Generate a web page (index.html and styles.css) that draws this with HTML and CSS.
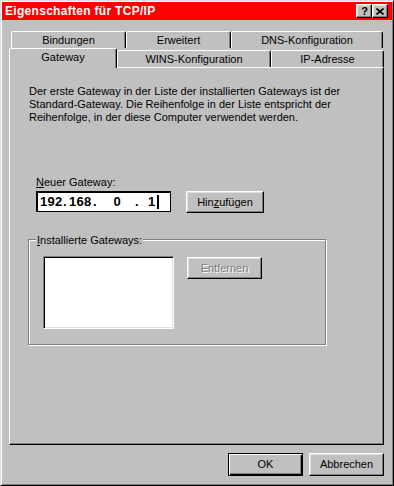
FILE: index.html
```html
<!DOCTYPE html>
<html lang="de">
<head>
<meta charset="utf-8">
<title>Eigenschaften für TCP/IP</title>
<link rel="stylesheet" href="styles.css">
</head>
<body>
<div class="window">
  <div class="titlebar">
    <span class="title">Eigenschaften für TCP/IP</span>
    <span class="tbtn help">?</span>
    <span class="tbtn close"><svg width="8" height="7" viewBox="0 0 8 7"><path d="M0.5 0.5 L7.5 6.5 M7.5 0.5 L0.5 6.5" stroke="#000" stroke-width="1.6" fill="none"/></svg></span>
  </div>

  <div class="tabrow row1">
    <div class="tab t-bind">Bindungen</div>
    <div class="tab t-erw">Erweitert</div>
    <div class="tab t-dns">DNS-Konfiguration</div>
  </div>
  <div class="tabrow row2">
    <div class="tab t-gw selected">Gateway</div>
    <div class="tab t-wins">WINS-Konfiguration</div>
    <div class="tab t-ip">IP-Adresse</div>
  </div>

  <div class="panel">
    <div class="desc">
      <div class="line">Der erste Gateway in der Liste der installierten Gateways ist der</div>
      <div class="line">Standard-Gateway. Die Reihenfolge in der Liste entspricht der</div>
      <div class="line">Reihenfolge, in der diese Computer verwendet werden.</div>
    </div>

    <div class="label"><u>N</u>euer Gateway:</div>
    <div class="inrow">
      <div class="ipfield">
        <span class="seg s1">192</span><span class="dot">.</span><span class="seg s2">168</span><span class="dot">.</span><span class="seg s3">0</span><span class="dot">.</span><span class="seg s4">1</span><span class="caret"></span>
      </div>
      <div class="btn add">Hin<u>z</u>ufügen</div>
    </div>

    <div class="group">
      <div class="glabel"><u>I</u>nstallierte Gateways:</div>
      <div class="grow">
        <div class="listbox"></div>
        <div class="btn remove disabled">Entfernen</div>
      </div>
    </div>
  </div>

  <div class="footer">
    <div class="btn default">OK</div>
    <div class="btn">Abbrechen</div>
  </div>
</div>
</body>
</html>
```
FILE: styles.css
```css
* { box-sizing: border-box; }
html, body { margin: 0; padding: 0; background: #c0c0c0; }
body {
  font-family: "Liberation Sans", Arial, sans-serif;
  font-size: 11px;
  color: #000;
  line-height: 13px;
}
u { text-decoration: underline; text-underline-offset: 1px; }

.window {
  width: 394px;
  height: 486px;
  background: #c0c0c0;
  border: 1px solid;
  border-color: #dfdfdf #000 #000 #dfdfdf;
  box-shadow: inset 1px 1px #fff, inset -1px -1px #808080;
  padding: 1px;
  display: flex;
  flex-direction: column;
}

.titlebar {
  height: 18px;
  background: #ff0000;
  display: flex;
  align-items: center;
  padding: 0 4px 0 3px;
}
.title {
  color: #fff;
  font-weight: bold;
  font-size: 12px;
  letter-spacing: 0.3px;
  flex: 1;
  white-space: nowrap;
}
.tbtn {
  width: 16px;
  height: 14px;
  background: #c0c0c0;
  border: 1px solid;
  border-color: #fff #000 #000 #fff;
  box-shadow: inset -1px -1px #808080, inset 1px 1px #dfdfdf;
  display: flex;
  align-items: center;
  justify-content: center;
  font-weight: bold;
  font-size: 11px;
  line-height: 12px;
}
.tbtn.help { padding-left: 1px; }
.tbtn.close svg { display: block; }

.tabrow {
  display: flex;
  align-items: flex-start;
  height: 17px;
}
.row1 { margin: 11px 0 0 9px; }
.row2 { margin: 2px 0 0 7px; }

.tab {
  height: 17px;
  background: #c0c0c0;
  border: 1px solid;
  border-bottom: none;
  border-color: #fff #000 transparent #fff;
  border-radius: 2px 3px 0 0;
  box-shadow: inset -1px 0 #808080;
  display: flex;
  align-items: center;
  justify-content: center;
  white-space: nowrap;
  padding-top: 1px;
}
.t-bind { width: 115px; }
.t-erw { width: 105px; }
.t-dns { width: 152px; }
.t-gw { width: 108px; }
.t-wins { width: 154px; }
.t-ip { width: 113px; }
.tab.selected {
  height: 20px;
  margin-top: -2px;
  position: relative;
  z-index: 2;
  padding-top: 0;
  padding-bottom: 3px;
}

.panel {
  margin-left: 7px;
  width: 375px;
  height: 378px;
  border: 1px solid;
  border-color: #fff #000 #000 #fff;
  box-shadow: inset -1px -1px #808080;
  display: flex;
  flex-direction: column;
  align-items: flex-start;
}

.desc { margin: 17px 0 0 19px; }
.line { white-space: nowrap; }

.label { margin: 52px 0 0 26px; }

.inrow {
  display: flex;
  align-items: flex-start;
  margin: 2px 0 0 26px;
}
.ipfield {
  width: 135px;
  height: 21px;
  background: #fff;
  border: 1px solid #000;
  box-shadow: inset 1px 1px #000;
  display: flex;
  align-items: center;
  padding-left: 3px;
  font-weight: bold;
  font-size: 13px;
}
.seg, .dot { display: inline-block; white-space: nowrap; }
.s1 { width: 23px; letter-spacing: 0.3px; }
.s2 { width: 24px; letter-spacing: 0.3px; }
.dot { width: 6px; text-align: left; }
.s3 { width: 36px; text-align: center; }
.s4 { margin-left: 7px; }
.caret {
  display: inline-block;
  width: 2px;
  height: 14px;
  background: #000;
  margin-left: 2px;
}

.btn {
  width: 75px;
  height: 23px;
  background: #c0c0c0;
  border: 1px solid;
  border-color: #fff #000 #000 #fff;
  box-shadow: inset -1px -1px #808080, inset 1px 1px #dfdfdf;
  display: flex;
  align-items: center;
  justify-content: center;
  white-space: nowrap;
}
.btn.add {
  width: 78px;
  height: 22px;
  margin-left: 15px;
}
.btn.disabled {
  color: #808080;
  text-shadow: 1px 1px #fff;
}

.group {
  margin: 26px 0 0 18px;
  width: 298px;
  height: 106px;
  border: 1px solid #808080;
  box-shadow: inset 1px 1px #fff, 1px 1px #fff;
}
.glabel {
  margin: -6px 0 0 7px;
  padding: 0 1px;
  width: fit-content;
  background: #c0c0c0;
  white-space: nowrap;
}
.grow {
  display: flex;
  align-items: flex-start;
  margin: 9px 0 0 14px;
}
.listbox {
  width: 131px;
  height: 73px;
  background: #fff;
  border: 1px solid;
  border-color: #808080 #fff #fff #808080;
  box-shadow: inset 1px 1px #000, inset -1px -1px #dfdfdf;
}
.btn.remove {
  margin: 1px 0 0 13px;
  height: 22px;
}

.footer {
  display: flex;
  justify-content: flex-end;
  gap: 6px;
  margin: 8px 0 0 0;
  padding-right: 8px;
}
.btn.default {
  border-color: #000;
  box-shadow: inset 1px 1px #fff, inset -1px -1px #000, inset -2px -2px #808080;
}
```
